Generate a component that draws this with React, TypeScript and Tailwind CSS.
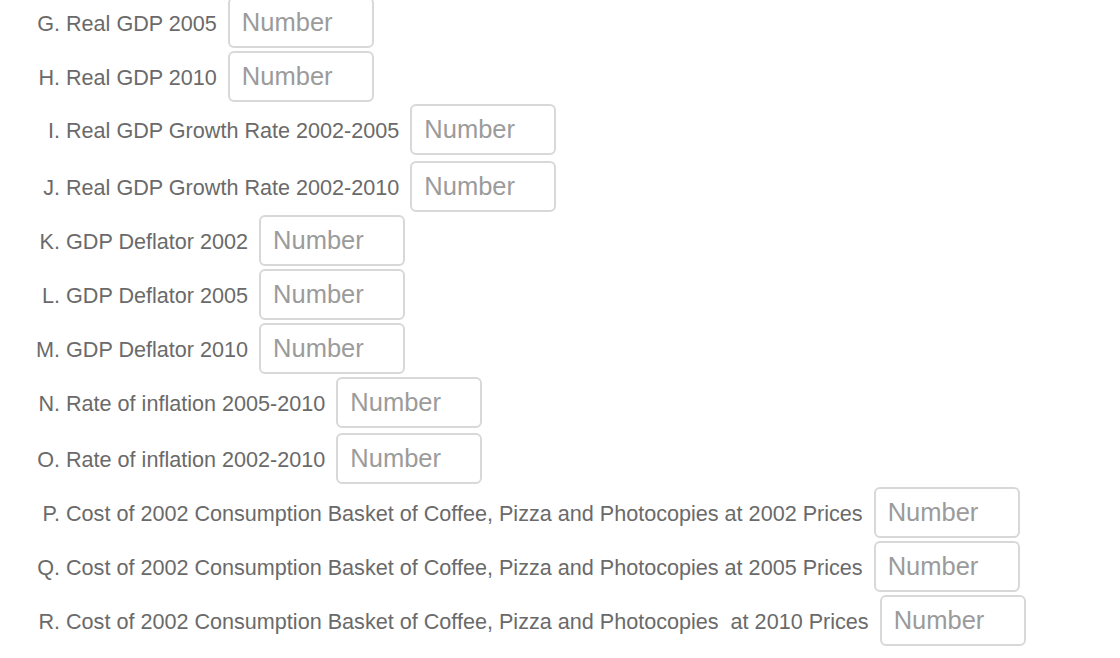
import React from "react";

const rows: { m: string; t: string; extra?: string }[] = [
  { m: "G.", t: "Real GDP 2005" },
  { m: "H.", t: "Real GDP 2010" },
  { m: "I.", t: "Real GDP Growth Rate 2002-2005", extra: "mt-[-1px]" },
  { m: "J.", t: "Real GDP Growth Rate 2002-2010", extra: "mt-[3px]" },
  { m: "K.", t: "GDP Deflator 2002" },
  { m: "L.", t: "GDP Deflator 2005" },
  { m: "M.", t: "GDP Deflator 2010" },
  { m: "N.", t: "Rate of inflation 2005-2010" },
  { m: "O.", t: "Rate of inflation 2002-2010", extra: "mt-[2px]" },
  { m: "P.", t: "Cost of 2002 Consumption Basket of Coffee, Pizza and Photocopies at 2002 Prices" },
  { m: "Q.", t: "Cost of 2002 Consumption Basket of Coffee, Pizza and Photocopies at 2005 Prices" },
  { m: "R.", t: "Cost of 2002 Consumption Basket of Coffee, Pizza and Photocopies  at 2010 Prices" },
];

export default function App() {
  return (
    <div
      className="w-[1120px] h-[658px] overflow-hidden bg-white"
      style={{ fontFamily: '"Liberation Sans", Arial, Helvetica, sans-serif' }}
    >
      <div className="flex flex-col gap-[3px] mt-[-3px]">
        {rows.map((r) => (
          <div key={r.m} className={`flex items-baseline h-[51px] ${r.extra ?? ""}`}>
            <span className="w-[36px] ml-[24px] text-right text-[21.6px] text-[#6a6a6a] shrink-0">
              {r.m}
            </span>
            <span className="ml-[6px] text-[21.6px] text-[#6a6a6a] whitespace-pre">{r.t}</span>
            <input
              placeholder="Number"
              className="ml-[11px] w-[146px] h-[51px] border-2 border-[#d8d8d8] rounded-[6px] pl-[12px] text-[25.5px] text-[#6a6a6a] placeholder:text-[#9b9b9b] outline-none"
            />
          </div>
        ))}
      </div>
    </div>
  );
}
